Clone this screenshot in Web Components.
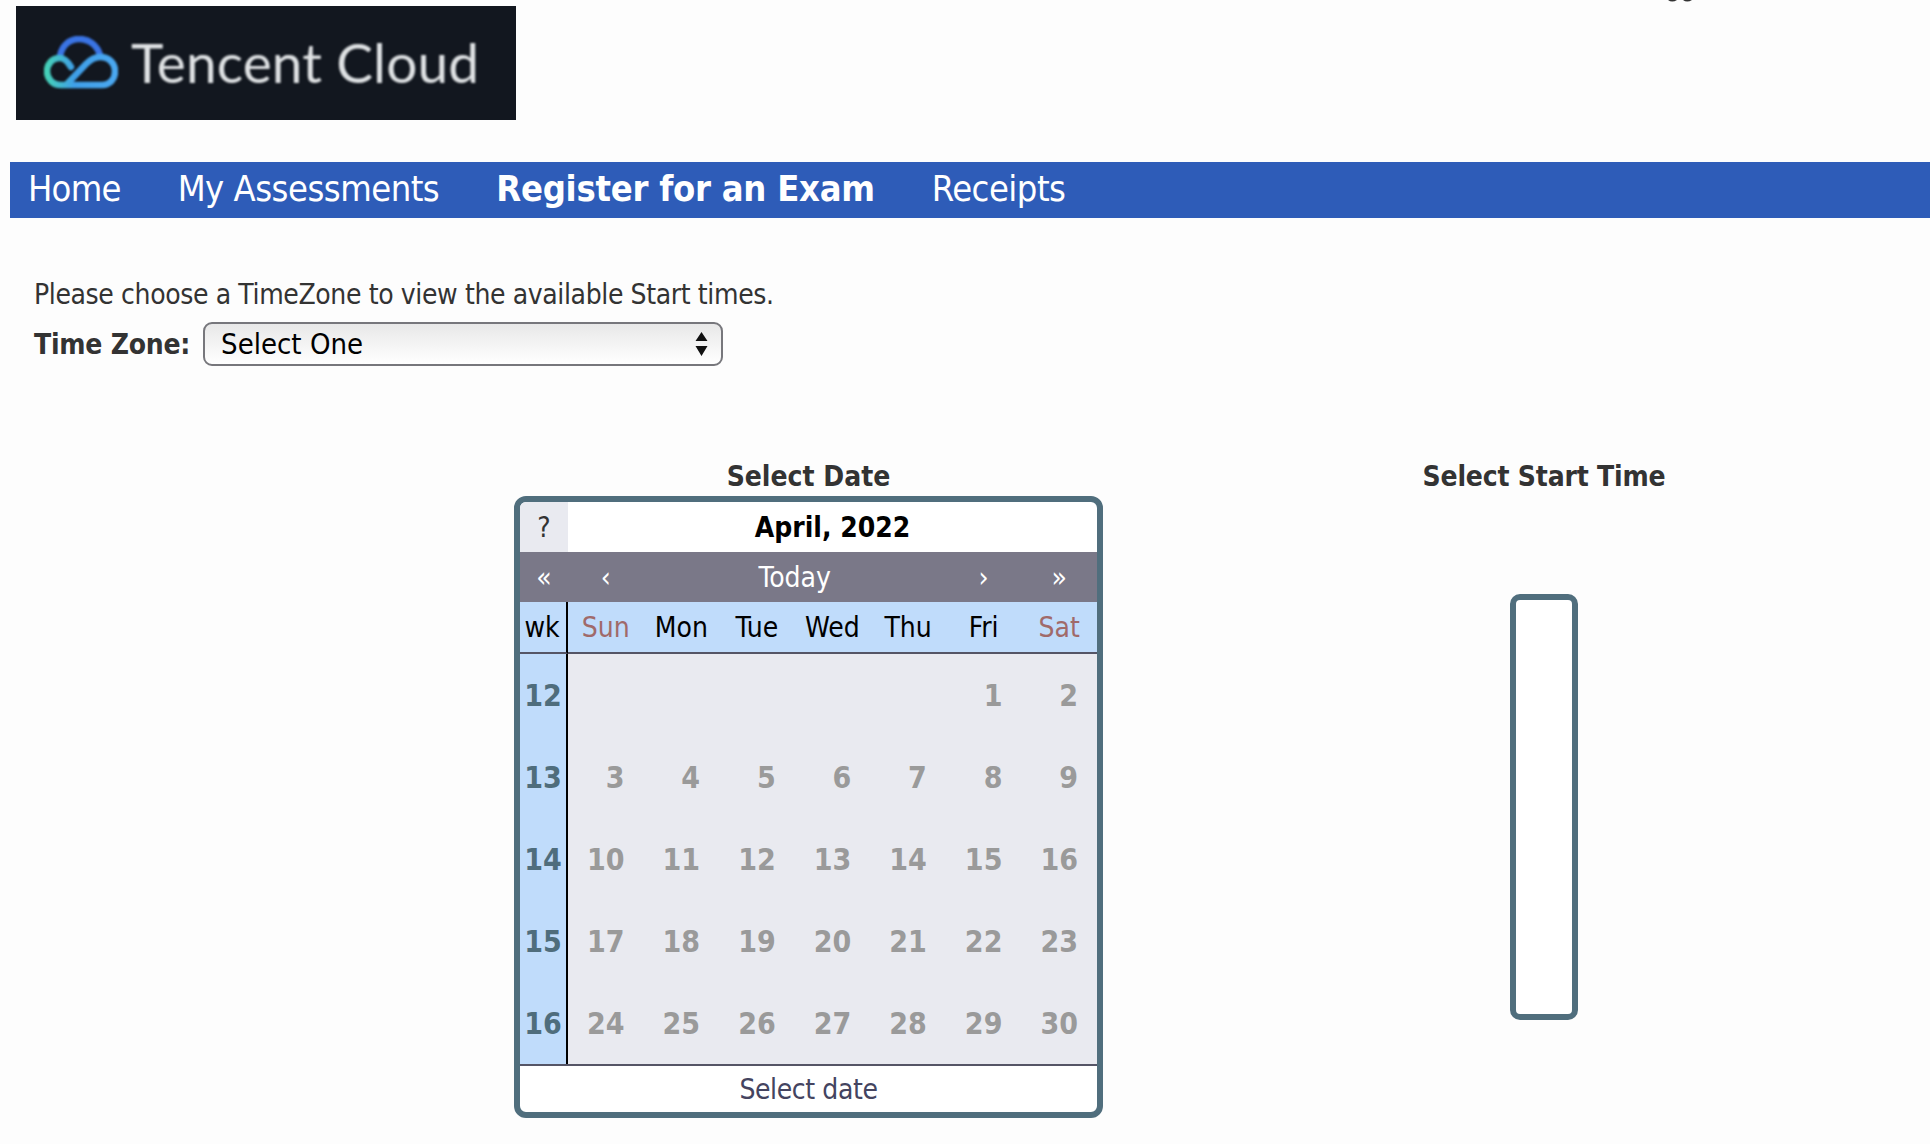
<!DOCTYPE html>
<html lang="en">
<head>
  <meta charset="UTF-8">
  <title>Register for an Exam</title>
  <style>
    html, body { background: #fdfdfd; }
    body {
      margin: 0;
      height: 1144px;
      overflow: hidden;
      font-family: "DejaVu Sans", Tahoma, sans-serif;
      font-stretch: condensed;
      color: #333;
    }
    .clipped-line { position: absolute; left: 1668px; top: 0; }
    main-nav a { letter-spacing: -0.5px; }
    main-nav a.home { letter-spacing: -0.75px; }
    main-nav a.active { font-weight: bold; letter-spacing: -0.25px; }
  </style>
</head>
<body>
  <svg class="clipped-line" width="26" height="3" viewBox="0 0 26 3" aria-hidden="true">
    <path d="M0 0 Q4 3 9 0Z M15 0 Q19 3 24 0Z" fill="#333"/>
  </svg>
  <site-logo></site-logo>
  <main-nav>
    <a class="home">Home</a>
    <a>My Assessments</a>
    <a class="active">Register for an Exam</a>
    <a>Receipts</a>
  </main-nav>
  <zone-picker></zone-picker>
  <exam-schedule></exam-schedule>

  <script>
    class SiteLogo extends HTMLElement {
      constructor() {
        super();
        this.attachShadow({ mode: 'open' });
        this.shadowRoot.innerHTML = `
          <style>
            :host {
              display: flex;
              align-items: center;
              box-sizing: border-box;
              width: 500px;
              height: 114px;
              margin: 6px 0 42px 16px;
              padding-left: 28px;
              gap: 13px;
              background: #12171f;
            }
            svg { display: block; filter: blur(0.9px); flex: none; }
            span {
              font-family: Lato, sans-serif;
              font-weight: 400;
              font-stretch: normal;
              font-size: 55px;
              letter-spacing: 0.1px;
              padding-bottom: 2px;
              color: #dfe2e4;
              filter: blur(0.9px);
              white-space: nowrap;
            }
          </style>
          <svg width="74" height="54" viewBox="0 0 74 54" fill="none" stroke-width="6.5" stroke-linecap="round">
            <defs>
              <linearGradient id="a" x1="0" y1="0" x2="1" y2="0">
                <stop offset="0" stop-color="#45d0b8"/><stop offset="0.4" stop-color="#3f9fe8"/><stop offset="1" stop-color="#4aa8f0"/>
              </linearGradient>
            </defs>
            <path d="M16 20C18 9 26 3 35 3C45 3 53 9 56 19" stroke="#3a74e4"/>
            <path d="M27 31C24 26 21 22 16 22C8 22 3 28 3 35.5C3 43 9 49 17 49H58C66 49 71 43 71 35.5C71 27 65 21 56 21C50 21 46 24 42 28L23 48" stroke="url(#a)"/>
          </svg>
          <span>Tencent Cloud</span>
        `;
      }
    }

    class MainNav extends HTMLElement {
      constructor() {
        super();
        this.attachShadow({ mode: 'open' });
        this.shadowRoot.innerHTML = `
          <style>
            :host {
              display: flex;
              align-items: center;
              height: 56px;
              margin-left: 10px;
              padding: 0 0 4px 18px;
              box-sizing: border-box;
              gap: 57px;
              background: #2e5cb8;
              color: #fff;
              font-size: 36px;
            }
          </style>
          <slot></slot>
        `;
      }
    }

    class ZonePicker extends HTMLElement {
      constructor() {
        super();
        this.attachShadow({ mode: 'open' });
        this.shadowRoot.innerHTML = `
          <style>
            :host {
              display: block;
              padding: 57px 0 0 34px;
              font-size: 28px;
            }
            p { margin: 0 0 7px; line-height: 40px; letter-spacing: -0.38px; }
            .row { display: flex; align-items: center; gap: 13px; }
            label { font-weight: bold; letter-spacing: -0.25px; }
            .select {
              display: flex;
              align-items: center;
              justify-content: space-between;
              box-sizing: border-box;
              width: 520px;
              height: 44px;
              padding: 0 13px 0 16px;
              border: 2px solid #77777c;
              border-radius: 9px;
              background: linear-gradient(#e8e8e8, #fff);
              color: #000;
              font-size: 29px;
            }
            svg { display: block; }
          </style>
          <p>Please choose a TimeZone to view the available Start times.</p>
          <div class="row">
            <label>Time Zone:</label>
            <div class="select">
              <span>Select One</span>
              <svg width="13" height="26" viewBox="0 0 13 26"><path d="M6.5 1L12.5 10H.5ZM.5 15H12.5L6.5 25Z" fill="#111"/></svg>
            </div>
          </div>
        `;
      }
    }

    class DateCalendar extends HTMLElement {
      constructor() {
        super();
        this.attachShadow({ mode: 'open' });
        const names = ['Sun', 'Mon', 'Tue', 'Wed', 'Thu', 'Fri', 'Sat'];
        const heads = names.map((n, i) =>
          `<div class="day${i === 0 || i === 6 ? ' weekend' : ''}">${n}</div>`).join('');
        // April 2022 starts on a Friday, week numbers begin at 12
        let cells = '';
        for (let w = 0; w < 5; w++) {
          cells += `<div class="wk num">${12 + w}</div>`;
          for (let d = 0; d < 7; d++) {
            const n = w * 7 + d - 4;
            cells += `<div class="date">${n > 0 ? n : ''}</div>`;
          }
        }
        this.shadowRoot.innerHTML = `
          <style>
            :host {
              display: block;
              box-sizing: border-box;
              width: 589px;
              border: 6px solid #506e7d;
              border-radius: 12px;
              background: #fff;
              overflow: hidden;
              font-size: 28px;
              color: #000;
            }
            .title { display: grid; grid-template-columns: 48px 1fr; height: 50px; }
            .help { display: grid; place-items: center; background: #e9eaf0; color: #333; }
            .month { display: grid; place-items: center; font-weight: bold; }
            .tools {
              display: grid;
              grid-template-columns: 48px 75.6px 1fr 75.6px 75.6px;
              height: 50px;
              background: #7a7888;
              color: #fff;
            }
            .tools div { display: grid; place-items: center; }
            .grid {
              display: grid;
              grid-template-columns: 48px repeat(7, 1fr);
              grid-template-rows: 52px repeat(5, 82px);
              background: #e9eaf0;
              border-bottom: 2px solid #555566;
            }
            .wk, .day { background: #c0dcfb; display: flex; align-items: center; justify-content: center; }
            .head { border-bottom: 2px solid #555566; padding-right: 2px; }
            .wk { border-right: 2px solid #000; box-sizing: border-box; }
            .day { border-bottom: 2px solid #555566; }
            .weekend { color: #a06a6a; }
            .num { font-size: 30px; font-weight: bold; color: #4f6d7c; }
            .date {
              display: flex;
              align-items: center;
              justify-content: flex-end;
              padding-right: 19px;
              font-size: 30px;
              font-weight: bold;
              color: #9a9a9a;
            }
            .foot { display: grid; place-items: center; height: 46px; color: #444460; letter-spacing: -0.4px; }
          </style>
          <div class="title"><div class="help">?</div><div class="month">April, 2022</div></div>
          <div class="tools"><div>«</div><div>‹</div><div>Today</div><div>›</div><div>»</div></div>
          <div class="grid">
            <div class="wk head">wk</div>${heads}
            ${cells}
          </div>
          <div class="foot">Select date</div>
        `;
      }
    }

    class ExamSchedule extends HTMLElement {
      constructor() {
        super();
        this.attachShadow({ mode: 'open' });
        this.shadowRoot.innerHTML = `
          <style>
            :host {
              display: grid;
              grid-template-columns: 589px 1fr;
              margin: 0 0 0 514px;
              padding-top: 90px;
              width: 1060px;
              font-size: 28px;
            }
            h3 {
              margin: 0;
              height: 40px;
              line-height: 42px;
              font-size: 28px;
              font-weight: bold;
              text-align: center;
              color: #333;
            }
            .times { display: flex; flex-direction: column; align-items: center; margin-left: 407px; width: 68px; white-space: nowrap; }
            .times h3 { letter-spacing: -0.2px; }
            .box {
              box-sizing: border-box;
              width: 68px;
              height: 426px;
              margin-top: 98px;
              border: 6px solid #506e7d;
              border-radius: 10px;
              background: #fff;
            }
          </style>
          <section>
            <h3>Select Date</h3>
            <date-calendar></date-calendar>
          </section>
          <section class="times">
            <h3>Select Start Time</h3>
            <div class="box"></div>
          </section>
        `;
      }
    }

    customElements.define('site-logo', SiteLogo);
    customElements.define('main-nav', MainNav);
    customElements.define('zone-picker', ZonePicker);
    customElements.define('date-calendar', DateCalendar);
    customElements.define('exam-schedule', ExamSchedule);
  </script>
</body>
</html>
